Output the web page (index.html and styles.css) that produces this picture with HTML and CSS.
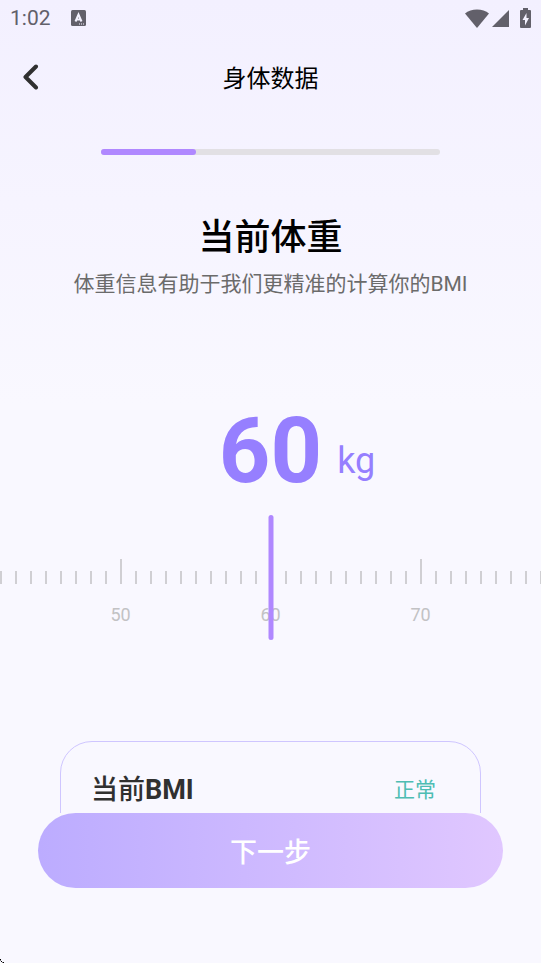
FILE: index.html
```html
<!DOCTYPE html>
<html lang="zh-CN">
<head>
<meta charset="utf-8">
<meta name="viewport" content="width=device-width, initial-scale=1">
<title>身体数据</title>
<link rel="stylesheet" href="styles.css">
</head>
<body>
<div class="status">
  <time>1:02</time>
  <svg class="status-app" width="15" height="16" viewBox="0 0 15 16"><rect width="15" height="16" rx="1.5" fill="#62606a"/><path d="M4.500 11.500 7.500 4.500l3 7M5.500 9.500h4" fill="none" stroke="#f4f2ff" stroke-width="2"/><path d="M8 14h1M10 14h1M12 14h1" stroke="#f4f2ff"/></svg>
  <span class="status-icons">
    <svg width="24" height="19" viewBox="0 0 24 19"><path d="M0 4.500C6-1 18-1 24 4.500L12 19Z" fill="#62606a"/></svg>
    <svg width="17" height="17" viewBox="0 0 17 17"><path d="M17 0v17H0Z" fill="#62606a"/></svg>
    <svg class="battery" width="11" height="20" viewBox="0 0 11 20"><path d="M3 0h5v2h2q1 0 1 1v16q0 1-1 1H1q-1 0-1-1V3q0-1 1-1h2Z" fill="#62606a"/><path d="M6.500 5 2.500 12H5v5.500L9 10H6.500Z" fill="#f4f2ff"/></svg>
  </span>
</div>
<header class="header">
  <button class="back" type="button" aria-label="返回"><svg width="16" height="26" viewBox="0 0 16 26"><path d="M13 2.500 2.500 13 13 23.500" fill="none" stroke="#303030" stroke-width="4" stroke-linecap="round" stroke-linejoin="round"/></svg></button>
  <h1>身体数据</h1>
</header>
<main class="content">
  <div class="progress" role="progressbar" aria-valuenow="28" aria-valuemin="0" aria-valuemax="100"><div class="progress-fill"></div></div>
  <h2>当前体重</h2>
  <p class="hint">体重信息有助于我们更精准的计算你的BMI</p>
  <p class="value"><strong>60</strong><span class="unit">kg</span></p>
  <div class="ruler">
    <ol class="ticks">
      <li></li><li></li><li></li><li></li><li></li><li></li><li></li><li></li>
      <li class="major"><span>50</span></li>
      <li></li><li></li><li></li><li></li><li></li><li></li><li></li><li></li><li></li>
      <li class="major"><span>60</span></li>
      <li></li><li></li><li></li><li></li><li></li><li></li><li></li><li></li><li></li>
      <li class="major"><span>70</span></li>
      <li></li><li></li><li></li><li></li><li></li><li></li><li></li><li></li>
    </ol>
    <div class="needle"></div>
  </div>
  <section class="card">
    <h3>当前<b>BMI</b></h3>
    <span class="state">正常</span>
  </section>
</main>
<footer class="footer"><button class="next" type="button">下一步</button></footer>
<svg class="corner" width="4" height="4" viewBox="0 0 4 4"><path d="M0 0h1v1H0ZM1 2h1v1H1ZM3 3h1v1H3Z" fill="#000"/><path d="M0 1h1v1H0ZM2 3h1v1H2Z" fill="#777"/></svg>
</body>
</html>
```
FILE: styles.css
```css
* { box-sizing: border-box; }

body {
  position: relative;
  display: flex;
  flex-direction: column;
  height: 100vh;
  margin: 0;
  overflow: hidden;
  background: linear-gradient(#f3f0ff, #f9f8ff 42%);
  color: #000;
  font-family: Roboto, "Noto Sans CJK SC", sans-serif;
}

h1, h2, h3, p, ol { margin: 0; padding: 0; }
button { border: 0; padding: 0; font: inherit; cursor: pointer; }
svg { display: block; }

.status {
  display: flex;
  align-items: center;
  gap: 20px;
  height: 36px;
  padding: 0 10px;
  color: #62606a;
  font-size: 21px;
}
.status-icons {
  display: flex;
  align-items: center;
  gap: 3px;
  margin-left: auto;
}
.battery { margin-left: 8px; }

.header {
  display: grid;
  grid-template-columns: 40px 1fr 40px;
  align-items: center;
  height: 81px;
  padding: 0 23px;
}
.back { justify-self: start; background: none; }
h1 { font-size: 24px; font-weight: 400; text-align: center; }

.content {
  flex: 1;
  min-height: 0;
  overflow: hidden;
  padding-top: 32px;
  text-align: center;
}

.progress {
  width: 62.5%;
  height: 6px;
  margin: 0 auto;
  border-radius: 3px;
  background: #e2e0e4;
}
.progress-fill {
  width: 28%;
  height: 100%;
  border-radius: 3px;
  background: #b088ff;
}

h2 {
  margin-top: 59px;
  font-size: 36px;
  font-weight: 500;
  line-height: 48px;
}
.hint {
  margin-top: 6px;
  color: #6b6b6b;
  font-size: 21px;
  line-height: 32px;
}

.value {
  display: grid;
  grid-template-columns: 1fr auto 1fr;
  align-items: end;
  column-gap: 15px;
  margin-top: 98px;
  color: #967fff;
}
.value strong {
  grid-column: 2;
  font-size: 90px;
  font-weight: 700;
  line-height: 108px;
}
.unit { font-size: 36px; line-height: 90px; text-align: left; }

.ruler {
  position: relative;
  height: 125px;
  margin-top: 9px;
}
.ticks {
  display: flex;
  justify-content: center;
  padding-top: 44px;
  overflow: hidden;
  list-style: none;
}
.ticks li {
  display: flex;
  flex: 0 0 15px;
  flex-direction: column;
  align-items: center;
  min-width: 0;
  padding-top: 12px;
}
.ticks li::before {
  content: "";
  width: 2px;
  height: 13px;
  background: #d0cfd3;
}
.ticks .major { padding-top: 0; }
.ticks .major::before { height: 25px; }
.ticks span {
  margin-top: 19px;
  color: #c2c2c4;
  font-size: 18px;
  line-height: 24px;
}
.needle {
  position: absolute;
  top: 0;
  left: 50%;
  width: 5px;
  height: 100%;
  border-radius: 3px;
  background: #b088ff;
  transform: translateX(-50%);
}

.card {
  display: flex;
  align-items: flex-start;
  justify-content: space-between;
  min-height: 180px;
  margin: 101px 60px 0;
  padding: 28px 44px 28px 30px;
  border: 1px solid #cfc6ff;
  border-radius: 32px;
}
h3 {
  color: #303030;
  font-size: 27px;
  font-weight: 500;
  line-height: 40px;
}
h3 b { font-weight: 700; }
.state { color: #4dbdb3; font-size: 21px; line-height: 40px; }

.footer { padding: 0 38px 75px; }
.next {
  width: 100%;
  height: 75px;
  border-radius: 38px;
  background: linear-gradient(90deg, #bcacff, #e0c7ff);
  color: #fff;
  font-size: 27px;
  font-weight: 500;
}

.corner { position: absolute; bottom: 0; left: 0; }
```
